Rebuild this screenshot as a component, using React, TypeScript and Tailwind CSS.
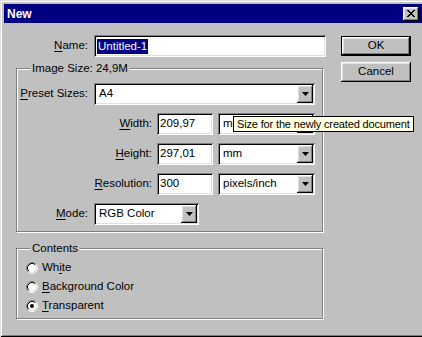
import type { ReactNode } from "react"

const sunken =
  "bg-white shadow-[inset_1px_1px_0_#808080,inset_-1px_-1px_0_#ffffff,inset_2px_2px_0_#000000,inset_-2px_-2px_0_#dfdfdf]"
const raised =
  "bg-[#c0c0c0] shadow-[inset_-1px_-1px_0_#000000,inset_1px_1px_0_#ffffff,inset_-2px_-2px_0_#808080,inset_2px_2px_0_#dfdfdf]"

function U({ children }: { children: ReactNode }) {
  return <span className="underline underline-offset-[2px]">{children}</span>
}

function Select({ value, className }: { value: string; className: string }) {
  return (
    <div className={`${sunken} h-[22px] flex items-center p-[2px] ${className}`}>
      <span className="flex-1 pl-[3px] whitespace-nowrap overflow-hidden">{value}</span>
      <div className={`${raised} w-[16px] h-full flex items-center justify-center`}>
        <svg width="7" height="4" viewBox="0 0 7 4">
          <polygon points="0,0 7,0 3.5,4" fill="#000" />
        </svg>
      </div>
    </div>
  )
}

function Input({ value, className }: { value: ReactNode; className: string }) {
  return (
    <div className={`${sunken} h-[22px] flex items-center pl-[3px] whitespace-nowrap ${className}`}>
      {value}
    </div>
  )
}

function Group({ label, className, children }: { label: string; className: string; children: ReactNode }) {
  return (
    <div className={`relative border border-[#808080] shadow-[1px_1px_0_#ffffff,inset_1px_1px_0_#ffffff] ${className}`}>
      <span className="absolute left-[13px] -top-[8px] bg-[#c0c0c0] px-[2px] leading-[14px]">{label}</span>
      {children}
    </div>
  )
}

function Radio({ checked, children }: { checked?: boolean; children: ReactNode }) {
  return (
    <div className="flex items-center h-[19px] pl-[9px] gap-[4px]">
      <svg width="12" height="12" viewBox="0 0 12 12">
        <circle cx="6" cy="6" r="4.5" fill="#fff" />
        <path d="M2.11 9.89A5.5 5.5 0 0 1 9.89 2.11" fill="none" stroke="#808080" />
        <path d="M9.89 2.11A5.5 5.5 0 0 1 2.11 9.89" fill="none" stroke="#fff" />
        <path d="M2.82 9.18A4.5 4.5 0 0 1 9.18 2.82" fill="none" stroke="#000" />
        <path d="M9.18 2.82A4.5 4.5 0 0 1 2.82 9.18" fill="none" stroke="#dfdfdf" />
        {checked && <circle cx="6" cy="6" r="2" fill="#000" />}
      </svg>
      <span>{children}</span>
    </div>
  )
}

export default function App() {
  return (
    <div className="w-[422px] h-[337px] overflow-hidden">
      <div className="relative w-[426px] h-[337px] bg-[#c0c0c0] p-[4px] flex flex-col text-black text-[11.5px] font-['Liberation_Sans',Arial,sans-serif] shadow-[inset_1px_1px_0_#dfdfdf,inset_-1px_-1px_0_#000000,inset_2px_2px_0_#ffffff,inset_-2px_-2px_0_#808080]">
        <div className="h-[19px] bg-[#000080] flex items-center justify-between pl-[3px] pr-[3px]">
          <span className="text-white font-bold text-[12px]">New</span>
          <div className={`${raised} w-[16px] h-[14px] flex items-center justify-center`}>
            <svg width="8" height="7" viewBox="0 0 8 7" shapeRendering="crispEdges">
              <path d="M0 0h2v1h-2zM6 0h2v1h-2zM1 1h2v1h-2zM5 1h2v1h-2zM2 2h4v1h-4zM3 3h2v1h-2zM2 4h4v1h-4zM1 5h2v1h-2zM5 5h2v1h-2zM0 6h2v1h-2zM6 6h2v1h-2z" fill="#000" />
            </svg>
          </div>
        </div>

        <div className="flex pt-[12px] pl-[12px]">
          <div className="w-[310px] flex flex-col">
            <div className="flex items-center h-[22px]">
              <span className="w-[72px] text-right">
                <U>N</U>ame:
              </span>
              <Input
                className="ml-[6px] w-[232px]"
                value={<span className="bg-[#000080] text-white leading-[15px] px-[1px]">Untitled-1</span>}
              />
            </div>

            <Group label="Image Size: 24,9M" className="mt-[11px] w-[307px] pt-[14px] pb-[6px] flex flex-col gap-[8px]">
              <div className="flex items-center">
                <span className="w-[71px] text-right">
                  <U>P</U>reset Sizes:
                </span>
                <Select value="A4" className="ml-[6px] w-[221px]" />
              </div>
              <div className="flex items-center">
                <span className="w-[135px] text-right">
                  <U>W</U>idth:
                </span>
                <Input value="209,97" className="ml-[5px] w-[56px]" />
                <Select value="mm" className="ml-[5px] w-[97px]" />
              </div>
              <div className="flex items-center">
                <span className="w-[135px] text-right">
                  <U>H</U>eight:
                </span>
                <Input value="297,01" className="ml-[5px] w-[56px]" />
                <Select value="mm" className="ml-[5px] w-[97px]" />
              </div>
              <div className="flex items-center">
                <span className="w-[135px] text-right">
                  <U>R</U>esolution:
                </span>
                <Input value="300" className="ml-[5px] w-[56px]" />
                <Select value="pixels/inch" className="ml-[5px] w-[97px]" />
              </div>
              <div className="flex items-center">
                <span className="w-[71px] text-right">
                  <U>M</U>ode:
                </span>
                <Select value="RGB Color" className="ml-[6px] w-[105px]" />
              </div>
            </Group>

            <Group label="Contents" className="mt-[16px] w-[307px] pt-[9px] pb-[3px] flex flex-col">
              <Radio>
                Wh<U>i</U>te
              </Radio>
              <Radio>
                <U>B</U>ackground Color
              </Radio>
              <Radio checked>
                <U>T</U>ransparent
              </Radio>
            </Group>
          </div>

          <div className="ml-[15px] pt-[1px] flex flex-col gap-[6px]">
            <div className="w-[70px] h-[20px] border border-black">
              <div className={`${raised} w-full h-full flex items-center justify-center`}>OK</div>
            </div>
            <div className={`${raised} w-[70px] h-[20px] flex items-center justify-center`}>Cancel</div>
          </div>
        </div>

        <div className="absolute left-[233px] top-[116px] h-[16px] bg-[#ffffe1] border border-black px-[3px] flex items-center text-[11px] tracking-[-0.15px] whitespace-nowrap">
          Size for the newly created document
        </div>
      </div>
    </div>
  )
}
